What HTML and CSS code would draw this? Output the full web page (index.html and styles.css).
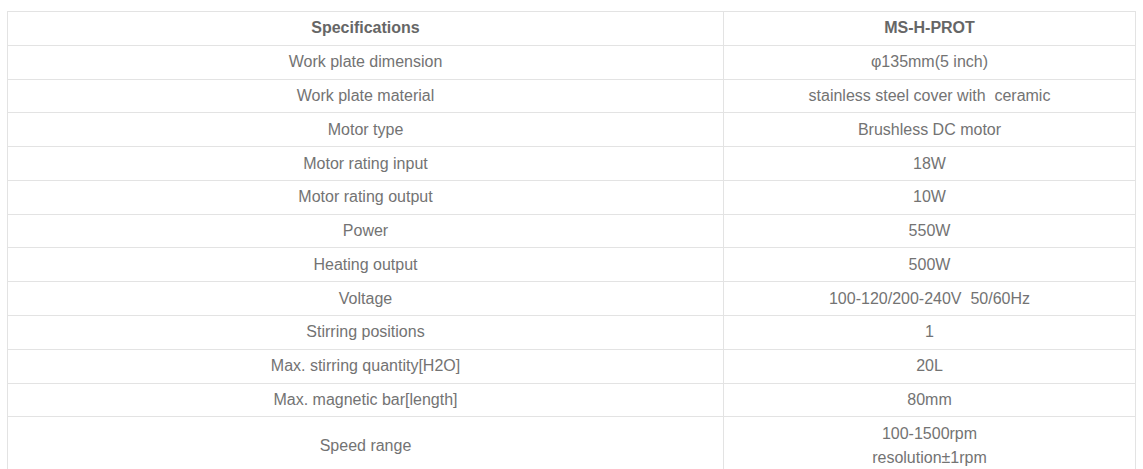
FILE: index.html
```html
<!DOCTYPE html>
<html lang="en">
<head>
<meta charset="utf-8">
<title>Specifications</title>
<link rel="stylesheet" href="styles.css">
</head>
<body>
<div class="wrap">
<table class="spec">
  <colgroup><col class="c1"><col class="c2"></colgroup>
  <thead>
    <tr><th>Specifications</th><th>MS-H-PROT</th></tr>
  </thead>
  <tbody>
    <tr><td>Work plate dimension</td><td>φ135mm(5 inch)</td></tr>
    <tr><td>Work plate material</td><td>stainless steel cover with&nbsp; ceramic</td></tr>
    <tr><td>Motor type</td><td>Brushless DC motor</td></tr>
    <tr><td>Motor rating input</td><td>18W</td></tr>
    <tr><td>Motor rating output</td><td>10W</td></tr>
    <tr><td>Power</td><td>550W</td></tr>
    <tr><td>Heating output</td><td>500W</td></tr>
    <tr><td>Voltage</td><td>100-120/200-240V&nbsp; 50/60Hz</td></tr>
    <tr><td>Stirring positions</td><td>1</td></tr>
    <tr><td>Max. stirring quantity[H2O]</td><td>20L</td></tr>
    <tr><td>Max. magnetic bar[length]</td><td>80mm</td></tr>
    <tr><td>Speed range</td><td>100-1500rpm<br>resolution±1rpm</td></tr>
  </tbody>
</table>
</div>
</body>
</html>
```
FILE: styles.css
```css
html, body {
  margin: 0;
  padding: 0;
  background: #fff;
}
body {
  font-family: "Liberation Sans", Arial, sans-serif;
  color: #737373;
  overflow: hidden;
}
.wrap {
  padding: 11px 0 0 7px;
}
.spec {
  border-collapse: collapse;
  width: 1128px;
  table-layout: fixed;
  font-size: 16px;
  line-height: 24px;
}
.c1 { width: 716px; }
.c2 { width: 412px; }
.spec th,
.spec td {
  border: 1px solid #e3e3e3;
  padding: 4.4px 8px;
  text-align: center;
  vertical-align: middle;
}
.spec th {
  font-weight: bold;
  color: #666;
}
```
